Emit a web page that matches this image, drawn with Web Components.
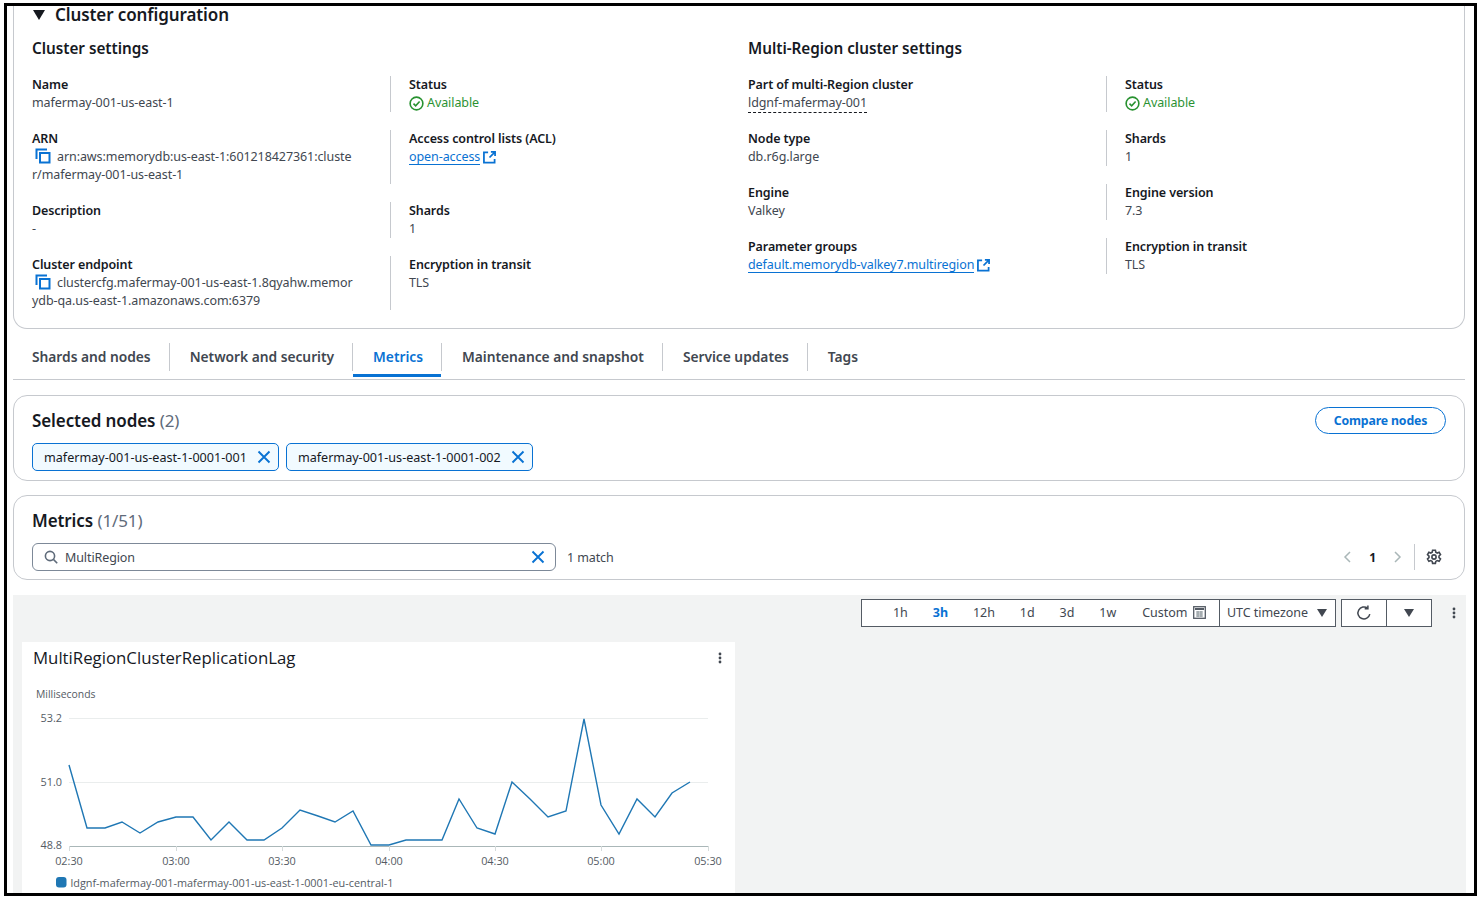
<!DOCTYPE html>
<html lang="en">
<head>
<meta charset="utf-8">
<title>Cluster configuration</title>
<style>
  html, body { margin: 0; padding: 0; background: #fff; }
  body { font-family: "Noto Sans", "Liberation Sans", sans-serif; color: #16191f; }
</style>
</head>
<body>
<cluster-page></cluster-page>

<script>
// icons
const ICONS = {
  copy: '<svg width="16" height="16" viewBox="0 0 16 16" fill="none" stroke="#0972d3" stroke-width="2"><path d="M1.5 11V1.5H12"/><rect x="5" y="5" width="9.5" height="9.5"/></svg>',
  ext: '<svg width="13" height="13" viewBox="0 0 14 14" fill="none" stroke="#0972d3" stroke-width="1.9"><path d="M5.5 1.5H1v11h11.5V8.5"/><path d="M8.5 1H13v4.5M13 1L7 7"/></svg>',
  ok: '<svg width="15" height="15" viewBox="0 0 16 16" fill="none" stroke="#037f0c" stroke-width="1.7"><circle cx="8" cy="8" r="6.8"/><path d="M4.8 8.2l2.3 2.3 4.2-4.6"/></svg>',
  x: '<svg width="14" height="14" viewBox="0 0 14 14" fill="none" stroke="#0972d3" stroke-width="1.9"><path d="M1.5 1.5l11 11M12.5 1.5l-11 11"/></svg>',
  search: '<svg width="14" height="14" viewBox="0 0 14 14" fill="none" stroke="#5f6b7a" stroke-width="1.6"><circle cx="6" cy="6" r="4.6"/><path d="M9.4 9.4l3.8 3.8"/></svg>',
  gear: '<svg width="16" height="16" viewBox="0 0 16 16" fill="none" stroke="#414750" stroke-width="1.6"><path d="M6.6 1.2h2.8l.4 2 1.4.8 1.9-.7 1.4 2.4-1.5 1.3v1.6l1.5 1.3-1.4 2.4-1.9-.7-1.4.8-.4 2H6.6l-.4-2-1.4-.8-1.9.7-1.4-2.4 1.5-1.3V7.1L1.5 5.7l1.4-2.4 1.9.7 1.4-.8z"/><circle cx="8" cy="8" r="2.1"/></svg>',
  refresh: '<svg width="16" height="16" viewBox="0 0 16 16" fill="none" stroke="#414750" stroke-width="1.5"><path d="M13.8 9.2A6 6 0 1 1 11.6 3.2"/><path d="M11.9 .6v3.2H8.7" /></svg>',
  cal: '<svg width="13" height="13" viewBox="0 0 13 13"><rect x=".7" y=".7" width="11.6" height="11.6" fill="none" stroke="#545b64" stroke-width="1.3"/><rect x="2" y="2" width="9" height="2" fill="#545b64"/><path d="M3 6h7M3 8h7M3 10h7M5 5v6M8 5v6" stroke="#879196" stroke-width="1"/></svg>',
  caret: '<svg width="10" height="8" viewBox="0 0 10 8"><path d="M0 0h10L5 8z" fill="#414750"/></svg>',
  dots: '<svg width="4" height="12" viewBox="0 0 4 12" fill="#414750"><circle cx="2" cy="2" r="1.4"/><circle cx="2" cy="6" r="1.4"/><circle cx="2" cy="10" r="1.4"/></svg>'
};

class KvItem extends HTMLElement {
  constructor() {
    super();
    this.attachShadow({ mode: 'open' }).innerHTML = `
      <style>
        :host { display: block; line-height: 18px; }
        .k { font-size: 12.5px; font-weight: 600; color: #16191f; letter-spacing: -.1px; }
        .v { font-size: 12.5px; color: #414750; letter-spacing: -.08px; word-break: break-all; }
      </style>
      <div class="k">${this.getAttribute('label')}</div>
      <div class="v"><slot></slot></div>`;
  }
}
customElements.define('kv-item', KvItem);

// two column group with the vertical rule on the right one
class KvGrid extends HTMLElement {
  constructor() {
    super();
    this.attachShadow({ mode: 'open' }).innerHTML = `
      <style>
        :host { display: grid; grid-template-columns: var(--left) 1fr; row-gap: 18px; }
        ::slotted(kv-item:nth-child(even)) { border-left: 1px solid #c6c9ce; padding-left: 18px; }
        ::slotted(kv-item:nth-child(odd)) { padding-right: 36px; }
      </style>
      <slot></slot>`;
  }
}
customElements.define('kv-grid', KvGrid);

class LinkText extends HTMLElement {
  constructor() {
    super();
    this.attachShadow({ mode: 'open' }).innerHTML = `
      <style>
        :host { display: inline-flex; align-items: center; gap: 3px; height: 18px; vertical-align: top; color: #0972d3; word-break: normal; }
        span { border-bottom: 1px solid #0972d3; line-height: 15px; }
        svg { display: block; }
      </style>
      <span><slot></slot></span>${ICONS.ext}`;
  }
}
customElements.define('link-text', LinkText);

class StatusOk extends HTMLElement {
  constructor() {
    super();
    this.attachShadow({ mode: 'open' }).innerHTML = `
      <style>
        :host { display: inline-flex; align-items: center; gap: 3px; height: 18px; vertical-align: top; color: #037f0c; opacity: .85; }
        svg { display: block; }
      </style>
      ${ICONS.ok}<slot></slot>`;
  }
}
customElements.define('status-ok', StatusOk);

class CopyIcon extends HTMLElement {
  constructor() {
    super();
    this.attachShadow({ mode: 'open' }).innerHTML = `
      <style>
        :host { display: inline-block; width: 16px; height: 14px; margin: 0 6px 0 3px; vertical-align: -3px; }
      </style>${ICONS.copy}`;
  }
}
customElements.define('copy-icon', CopyIcon);

class TabBar extends HTMLElement {
  constructor() {
    super();
    const names = ['Shards and nodes', 'Network and security', 'Metrics', 'Maintenance and snapshot', 'Service updates', 'Tags'];
    const items = names.map(n => `<div class="tab${n === 'Metrics' ? ' on' : ''}"><span>${n}</span></div>`).join('');
    this.attachShadow({ mode: 'open' }).innerHTML = `
      <style>
        :host { display: block; height: 51px; width: 1452px; border-bottom: 1px solid #c6c9ce; box-sizing: border-box; }
        .row { display: flex; padding-top: 14px; }
        .tab { position: relative; height: 28px; padding: 0 18px 0 20px; border-left: 1px solid #c6c9ce; font-size: 13.8px; font-weight: 600; line-height: 28px; color: #414750; letter-spacing: -.03px; white-space: nowrap; }
        .tab:first-child { border-left: 0; padding-left: 19px; }
        .on { color: #0972d3; }
        .on::after { content: ""; position: absolute; left: 0; right: 0; bottom: -6px; height: 3px; background: #0972d3; }
      </style>
      <div class="row">${items}</div>`;
  }
}
customElements.define('tab-bar', TabBar);

class NodeChip extends HTMLElement {
  constructor() {
    super();
    this.attachShadow({ mode: 'open' }).innerHTML = `
      <style>
        :host { display: inline-flex; align-items: center; height: 28px; box-sizing: border-box; padding: 0 7px 0 11px; gap: 10px; background: #f1faff; border: 1px solid #0972d3; border-radius: 5px; font-size: 12.6px; color: #16191f; }
        svg { display: block; }
      </style>
      <slot></slot>${ICONS.x}`;
  }
}
customElements.define('node-chip', NodeChip);

class PanelCard extends HTMLElement {
  constructor() {
    super();
    this.attachShadow({ mode: 'open' }).innerHTML = `
      <style>
        :host { display: block; box-sizing: border-box; width: 1452px; border: 1px solid #c6c9ce; border-radius: 14px; padding: 13px 18px 0; background: #fff; }
      </style>
      <slot></slot>`;
  }
}
customElements.define('panel-card', PanelCard);

class PanelTitle extends HTMLElement {
  constructor() {
    super();
    this.attachShadow({ mode: 'open' }).innerHTML = `
      <style>
        :host { display: flex; justify-content: space-between; align-items: center; height: 24px; font-size: 17px; font-weight: 600; line-height: 24px; color: #16191f; letter-spacing: -.1px; }
        .c { font-weight: 400; color: #5f6b7a; }
      </style>
      <div><slot></slot> <span class="c">${this.getAttribute('count')}</span></div>
      <slot name="action"></slot>`;
  }
}
customElements.define('panel-title', PanelTitle);

class TimeBar extends HTMLElement {
  constructor() {
    super();
    const ranges = ['1h', '3h', '12h', '1d', '3d', '1w'];
    const btns = ranges.map(r => `<span class="r${r === '3h' ? ' on' : ''}">${r}</span>`).join('');
    this.attachShadow({ mode: 'open' }).innerHTML = `
      <style>
        :host { display: flex; justify-content: flex-end; align-items: center; height: 28px; padding-right: 10px; font-size: 12.5px; color: #414750; letter-spacing: -.05px; }
        .box { display: flex; align-items: center; height: 28px; box-sizing: border-box; border: 1px solid #545b64; padding-bottom: 1px; background: #fff; }
        .on { color: #0972d3; font-weight: 700; }
        .ranges { width: 358px; padding-left: 31px; gap: 25px; border-right: 0; white-space: nowrap; }
        .custom { display: flex; align-items: center; gap: 6px; margin-left: 1px; }
        .tz { width: 117px; padding-left: 7px; gap: 9px; white-space: nowrap; }
        .ic { width: 46px; justify-content: center; }
        .ic + .ic { border-left: 0; width: 45px; }
        .gap { width: 5px; }
        .dots { margin-left: 20px; }
        svg { display: block; }
      </style>
      <div class="box ranges">${btns}<span class="custom">Custom ${ICONS.cal}</span></div>
      <div class="box tz">UTC timezone ${ICONS.caret}</div>
      <div class="gap"></div>
      <div class="box ic">${ICONS.refresh}</div>
      <div class="box ic">${ICONS.caret}</div>
      <div class="dots">${ICONS.dots}</div>`;
  }
}
customElements.define('time-bar', TimeBar);

class MetricChart extends HTMLElement {
  constructor() {
    super();
    // samples in the widget's pixel space, read off the picture
    const pts = [[69,765],[87,828],[105,828],[122,822],[140,833],[158,822],[176,817],[193,817],[211,840],[229,822],[247,840],[264,840],[282,828],[300,810],[318,816],[335,822],[353,811],[371,845],[389,845],[406,840],[424,840],[442,840],[459,799],[477,828],[495,834],[512,782],[530,799],[548,817],[566,811],[584,719],[601,805],[619,834],[637,799],[655,817],[672,793],[690,782]];
    const line = pts.map(p => p.join(',')).join(' ');
    const ticks = [['02:30',69],['03:00',176],['03:30',282],['04:00',389],['04:30',495],['05:00',601],['05:30',708]];
    const off = 22; // widget left edge
    const top = 642; // widget top edge
    const tickSvg = ticks.map(t => `<path d="M${t[1] - off + .5} ${846 - top}v5" stroke="#d5dbdb"/><text x="${t[1] - off}" y="${865 - top}" text-anchor="middle">${t[0]}</text>`).join('');
    const grid = [[718,'53.2'],[782,'51.0']].map(g => `<path d="M${69 - off} ${g[0] - top + .5}H${708 - off}" stroke="#eaeded"/><text x="${62 - off}" y="${g[0] - top + 4}" text-anchor="end">${g[1]}</text>`).join('');
    this.attachShadow({ mode: 'open' }).innerHTML = `
      <style>
        :host { display: block; position: relative; box-sizing: border-box; width: 713px; height: 251px; margin-left: 9px; background: #fff; }
        .t { font-family: "Open Sans", "Noto Sans", sans-serif; font-size: 16.8px; line-height: 22px; color: #16191f; padding: 5px 11px 0; }
        .m { position: absolute; left: 696px; top: 10px; }
        svg.c { position: absolute; left: 0; top: 0; font-family: "Open Sans", "Noto Sans", sans-serif; font-size: 10.87px; fill: #545b64; }
        .m svg { display: block; }
      </style>
      <div class="t">${this.getAttribute('title')}</div>
      <div class="m">${ICONS.dots}</div>
      <svg class="c" width="713" height="251" viewBox="0 0 713 251">
        <text x="14" y="56" style="font-size:10.4px">Milliseconds</text>
        ${grid}
        <path d="M${69 - off} ${846 - top + .5}H${708 - off}" stroke="#aab7b8"/>
        <text x="${62 - off}" y="${845 - top + 4}" text-anchor="end">48.8</text>
        ${tickSvg}
        <polyline transform="translate(${-off} ${-top})" points="${line}" fill="none" stroke="#1f77b4" stroke-width="1.4"/>
        <rect x="34" y="235" width="10.5" height="10.5" rx="3" fill="#1f77b4"/>
        <text x="48.5" y="245">ldgnf-mafermay-001-mafermay-001-us-east-1-0001-eu-central-1</text>
      </svg>`;
  }
}
customElements.define('metric-chart', MetricChart);

class ClusterPage extends HTMLElement {
  constructor() {
    super();
    this.attachShadow({ mode: 'open' }).innerHTML = `
      <style>
        :host { display: block; box-sizing: border-box; width: 1480px; height: 899px; overflow: hidden; background: #fff; padding: 3px 3px 3px 4px; }
        .frame { box-sizing: border-box; width: 1473px; height: 893px; border: 3px solid #000; overflow: hidden; background: #fff; padding-left: 6px; }
        .config { box-sizing: border-box; width: 1452px; height: 323px; border: 1px solid #c6c9ce; border-top: 0; border-radius: 0 0 14px 14px; padding: 0 18px; }
        .head { display: flex; align-items: center; gap: 10px; height: 17px; font-size: 17px; line-height: 17px; font-weight: 600; letter-spacing: -.1px; margin-left: 1px; }
        .head svg { display: block; }
        .cols { display: grid; grid-template-columns: 716px 1fr; margin-top: 14px; }
        h2 { margin: 0 0 17px; font-size: 15.3px; line-height: 22px; font-weight: 600; letter-spacing: -.03px; }
        .nodes { height: 86px; margin-top: 15px; }
        .metrics { height: 85px; margin-top: 14px; }
        .chips { display: flex; gap: 7px; margin-top: 10px; }
        .btn { display: block; height: 27px; margin: -3px 0 -1px; box-sizing: border-box; border: 1px solid #0972d3; border-radius: 14px; color: #0972d3; font-size: 12.3px; font-weight: 700; line-height: 25px; width: 131px; text-align: center; letter-spacing: -.15px; white-space: nowrap; }
        .filter { display: flex; align-items: center; margin-top: 10px; font-size: 12.5px; letter-spacing: -.1px; color: #414750; }
        .input { display: flex; align-items: center; box-sizing: border-box; width: 524px; height: 28px; border: 1px solid #7d8998; border-radius: 6px; padding: 0 10px 0 11px; gap: 7px; color: #414750; }
        .input span { flex: 1; }
        .match { margin-left: 11px; flex: 1; }
        .pager { display: flex; align-items: center; color: #aab7b8; gap: 18px; margin-right: 4px; }
        .pager b { color: #16191f; font-weight: 700; font-size: 12px; }
        .pager i { display: block; width: 1px; height: 26px; background: #c6c9ce; margin-left: -6px; margin-right: -7px; }
        .pager svg { display: block; }
        .dash { margin-top: 15px; width: 1453px; height: 320px; background: #f2f3f3; padding-top: 4px; box-sizing: border-box; }
        metric-chart { margin-top: 15px; }
        .filter svg { display: block; }
      </style>
      <div class="frame">
        <section class="config">
          <div class="head"><svg width="12" height="10" viewBox="0 0 12 10"><path d="M0 0h12L6 10z" fill="#16191f"/></svg>Cluster configuration</div>
          <div class="cols">
            <div>
              <h2>Cluster settings</h2>
              <kv-grid style="--left:358px">
                <kv-item label="Name">mafermay-001-us-east-1</kv-item>
                <kv-item label="Status"><status-ok>Available</status-ok></kv-item>
                <kv-item label="ARN"><copy-icon></copy-icon>arn:aws:memorydb:us-east-1:601218427361:cluster/mafermay-001-us-east-1</kv-item>
                <kv-item label="Access control lists (ACL)"><link-text>open-access</link-text></kv-item>
                <kv-item label="Description">-</kv-item>
                <kv-item label="Shards">1</kv-item>
                <kv-item label="Cluster endpoint"><copy-icon></copy-icon>clustercfg.mafermay-001-us-east-1.8qyahw.memorydb-qa.us-east-1.amazonaws.com:6379</kv-item>
                <kv-item label="Encryption in transit">TLS</kv-item>
              </kv-grid>
            </div>
            <div>
              <h2>Multi-Region cluster settings</h2>
              <kv-grid style="--left:358px">
                <kv-item label="Part of multi-Region cluster"><span style="border-bottom:1px dashed #16191f;padding-bottom:1px">ldgnf-mafermay-001</span></kv-item>
                <kv-item label="Status"><status-ok>Available</status-ok></kv-item>
                <kv-item label="Node type">db.r6g.large</kv-item>
                <kv-item label="Shards">1</kv-item>
                <kv-item label="Engine">Valkey</kv-item>
                <kv-item label="Engine version">7.3</kv-item>
                <kv-item label="Parameter groups"><link-text>default.memorydb-valkey7.multiregion</link-text></kv-item>
                <kv-item label="Encryption in transit">TLS</kv-item>
              </kv-grid>
            </div>
          </div>
        </section>
        <tab-bar></tab-bar>
        <panel-card class="nodes">
          <panel-title count="(2)">Selected nodes<span slot="action" class="btn">Compare nodes</span></panel-title>
          <div class="chips">
            <node-chip>mafermay-001-us-east-1-0001-001</node-chip>
            <node-chip>mafermay-001-us-east-1-0001-002</node-chip>
          </div>
        </panel-card>
        <panel-card class="metrics">
          <panel-title count="(1/51)">Metrics</panel-title>
          <div class="filter">
            <div class="input">${ICONS.search}<span>MultiRegion</span>${ICONS.x}</div>
            <span class="match">1 match</span>
            <div class="pager">
              <svg width="8" height="12" viewBox="0 0 8 12" fill="none" stroke="#aab7b8" stroke-width="1.5"><path d="M7 1L2 6l5 5"/></svg>
              <b>1</b>
              <svg width="8" height="12" viewBox="0 0 8 12" fill="none" stroke="#aab7b8" stroke-width="1.5"><path d="M1 1l5 5-5 5"/></svg>
              <i></i>
              <span>${ICONS.gear}</span>
            </div>
          </div>
        </panel-card>
        <div class="dash">
          <time-bar></time-bar>
          <metric-chart title="MultiRegionClusterReplicationLag"></metric-chart>
        </div>
      </div>`;
  }
}
customElements.define('cluster-page', ClusterPage);
</script>
</body>
</html>
